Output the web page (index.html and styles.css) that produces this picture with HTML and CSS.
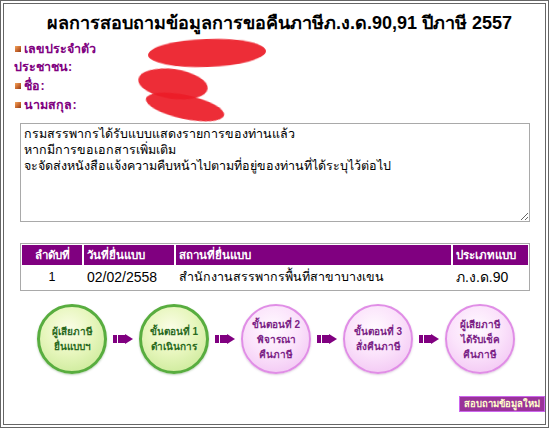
FILE: index.html
```html
<!DOCTYPE html>
<html lang="th">
<head>
    <meta charset="UTF-8">
    <title>ผลการสอบถามข้อมูลการขอคืนภาษี</title>
    <link rel="stylesheet" href="styles.css">
</head>
<body>
    <div class="frame">
        <h1 class="title">ผลการสอบถามข้อมูลการขอคืนภาษีภ.ง.ด.90,91 ปีภาษี 2557</h1>

        <div class="info">
            <div class="row">
                <div class="label"><span class="bullet"></span> เลขประจำตัว ประชาชน:</div>
                <div class="value"></div>
            </div>
            <div class="row">
                <div class="label"><span class="bullet"></span> ชื่อ:</div>
                <div class="value"></div>
            </div>
            <div class="row">
                <div class="label"><span class="bullet"></span> นามสกุล:</div>
                <div class="value"></div>
            </div>
            <span class="scribble s1"></span>
            <span class="scribble s2"></span>
            <span class="scribble s3"></span>
        </div>

        <textarea class="note" readonly>กรมสรรพากรได้รับแบบแสดงรายการของท่านแล้ว
หากมีการขอเอกสารเพิ่มเติม
จะจัดส่งหนังสือแจ้งความคืบหน้าไปตามที่อยู่ของท่านที่ได้ระบุไว้ต่อไป</textarea>

        <table class="result">
            <thead>
                <tr>
                    <th class="c-no">ลำดับที่</th>
                    <th class="c-date">วันที่ยื่นแบบ</th>
                    <th class="c-place">สถานที่ยื่นแบบ</th>
                    <th class="c-type">ประเภทแบบ</th>
                </tr>
            </thead>
            <tbody>
                <tr>
                    <td class="c-no">1</td>
                    <td class="c-date">02/02/2558</td>
                    <td class="c-place">สำนักงานสรรพากรพื้นที่สาขาบางเขน</td>
                    <td class="c-type">ภ.ง.ด.90</td>
                </tr>
            </tbody>
        </table>

        <div class="steps">
            <div class="step done">ผู้เสียภาษี<br>ยื่นแบบฯ</div>
            <svg class="arrow" width="20" height="10" viewBox="0 0 20 10"><rect x="0" y="1" width="4" height="8"/><rect x="5" y="1" width="7" height="8"/><polygon points="12,0 20,5 12,10"/></svg>
            <div class="step done">ขั้นตอนที่ 1<br>ดำเนินการ</div>
            <svg class="arrow" width="20" height="10" viewBox="0 0 20 10"><rect x="0" y="1" width="4" height="8"/><rect x="5" y="1" width="7" height="8"/><polygon points="12,0 20,5 12,10"/></svg>
            <div class="step">ขั้นตอนที่ 2<br>พิจารณา<br>คืนภาษี</div>
            <svg class="arrow" width="20" height="10" viewBox="0 0 20 10"><rect x="0" y="1" width="4" height="8"/><rect x="5" y="1" width="7" height="8"/><polygon points="12,0 20,5 12,10"/></svg>
            <div class="step">ขั้นตอนที่ 3<br>สั่งคืนภาษี</div>
            <svg class="arrow" width="20" height="10" viewBox="0 0 20 10"><rect x="0" y="1" width="4" height="8"/><rect x="5" y="1" width="7" height="8"/><polygon points="12,0 20,5 12,10"/></svg>
            <div class="step">ผู้เสียภาษี<br>ได้รับเช็ค<br>คืนภาษี</div>
        </div>

        <div class="actions">
            <button class="button" type="button">สอบถามข้อมูลใหม่</button>
        </div>
    </div>
</body>
</html>
```

FILE: styles.css
```css
body {
    margin: 0;
    font-family: Tahoma, "Liberation Sans", "DejaVu Sans", sans-serif;
    background-color: #fff;
}
.frame {
    width: 549px;
    height: 428px;
    box-sizing: border-box;
    border: 4px double #666;
    padding: 0 0 0 10px;
}
.title {
    margin: 4px 0 0;
    font-size: 18px;
    line-height: 30px;
    font-weight: bold;
    text-align: center;
    white-space: nowrap;
    color: #000;
}
.info {
    position: relative;
    display: flex;
    flex-direction: column;
    gap: 1px;
    margin-top: 2px;
}
.row {
    display: flex;
}
.label {
    width: 92px;
    font-size: 12.5px;
    line-height: 18px;
    font-weight: bold;
    color: #800080;
}
.bullet {
    display: inline-block;
    width: 6px;
    height: 6px;
    margin-left: 1px;
    background: linear-gradient(135deg, #f2a45c 0%, #c4622a 60%, #8a3e1a 100%);
    vertical-align: 1px;
}
.scribble {
    position: absolute;
    background-color: #ec1c27;
    border-radius: 50%;
    opacity: 0.92;
    filter: blur(0.6px);
}
.s1 {
    left: 134px;
    top: -1px;
    width: 118px;
    height: 28px;
    transform: rotate(-2deg);
}
.s2 {
    left: 124px;
    top: 29px;
    width: 70px;
    height: 30px;
    transform: rotate(8deg);
}
.s3 {
    left: 131px;
    top: 55px;
    width: 80px;
    height: 24px;
    transform: rotate(12deg);
}
.note {
    display: block;
    width: 510px;
    height: 99px;
    box-sizing: border-box;
    margin: 9px 0 0 6px;
    padding: 2px 3px;
    border: 1px solid #a9a9a9;
    font-family: inherit;
    font-size: 12.5px;
    line-height: 16px;
    color: #000;
    resize: vertical;
}
.result {
    width: 510px;
    margin: 21px 0 0 6px;
    border: 1px solid #a9a9a9;
    border-spacing: 0;
    padding: 1px;
    font-size: 12.5px;
}
.result th {
    height: 20px;
    padding: 0 3px;
    background-color: #800080;
    color: #fff;
    font-size: 11.5px;
    font-weight: bold;
    text-align: left;
    border-left: 2px solid #fff;
}
.result th:first-child {
    border-left: none;
}
.result td {
    height: 24px;
    padding: 0 3px;
    border-left: 2px solid #fff;
}
.result td:first-child {
    border-left: none;
}
.result .c-no {
    width: 54px;
    text-align: center;
}
.result .c-date {
    width: 84px;
}
.result td.c-date {
    font-size: 14px;
}
.result .c-type {
    width: 69px;
}
.result td.c-type {
    font-size: 14px;
}
.steps {
    display: flex;
    align-items: center;
    gap: 6px;
    margin: 13px 0 0 23px;
}
.step {
    width: 70px;
    height: 70px;
    box-sizing: border-box;
    border-radius: 50%;
    display: flex;
    align-items: center;
    justify-content: center;
    text-align: center;
    font-size: 10px;
    line-height: 15px;
    font-weight: bold;
    color: #7b1f86;
    border: 2px solid #e08ee6;
    background: radial-gradient(circle at 45% 35%, #fffaff 0%, #fbe3fb 45%, #efbdf1 100%);
    box-shadow: 0 1px 2px rgba(120, 60, 120, 0.25);
}
.step.done {
    color: #2a6a1e;
    border: 3px solid #58ad3f;
    background: radial-gradient(circle at 45% 35%, #fbfde8 0%, #e7f6bd 45%, #c3e68e 100%);
    box-shadow: 0 1px 2px rgba(40, 100, 30, 0.3);
}
.arrow {
    fill: #800080;
}
.actions {
    display: flex;
    justify-content: flex-end;
    margin-top: 22px;
}
.button {
    height: 16px;
    padding: 0 4px;
    border: 1px solid #cc66ee;
    background-color: #993399;
    color: #ffffcc;
    font-family: inherit;
    font-size: 9.5px;
    font-weight: bold;
    line-height: 14px;
    cursor: pointer;
}
```
